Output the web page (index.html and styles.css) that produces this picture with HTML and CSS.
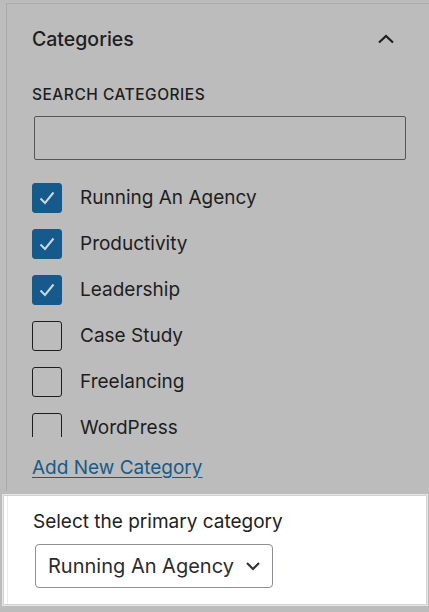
FILE: index.html
```html
<!DOCTYPE html>
<html lang="en">
<head>
<meta charset="utf-8">
<title>Categories</title>
<link rel="stylesheet" href="styles.css">
</head>
<body>
<div class="panel">
  <div class="panel-header">
    <h2 class="panel-title">Categories</h2>
    <svg class="chevron-up" width="18" height="10" viewBox="0 0 18 10" aria-hidden="true">
      <path d="M2 8.5 L9 2 L16 8.5" fill="none" stroke="#1e1e1e" stroke-width="2.2"/>
    </svg>
  </div>
  <label class="search-label" for="cat-search">SEARCH CATEGORIES</label>
  <input class="search-input" id="cat-search" type="text">
  <ul class="cat-list">
    <li class="cat-row"><span class="box checked"><svg width="30" height="30" viewBox="0 0 30 30"><path d="M8.5 15.5 L13 20 L21.5 9.5" fill="none" stroke="#c9d7e3" stroke-width="2"/></svg></span><span class="cat-name">Running An Agency</span></li>
    <li class="cat-row"><span class="box checked"><svg width="30" height="30" viewBox="0 0 30 30"><path d="M8.5 15.5 L13 20 L21.5 9.5" fill="none" stroke="#c9d7e3" stroke-width="2"/></svg></span><span class="cat-name">Productivity</span></li>
    <li class="cat-row"><span class="box checked"><svg width="30" height="30" viewBox="0 0 30 30"><path d="M8.5 15.5 L13 20 L21.5 9.5" fill="none" stroke="#c9d7e3" stroke-width="2"/></svg></span><span class="cat-name">Leadership</span></li>
    <li class="cat-row"><span class="box"></span><span class="cat-name">Case Study</span></li>
    <li class="cat-row"><span class="box"></span><span class="cat-name">Freelancing</span></li>
    <li class="cat-row"><span class="box"></span><span class="cat-name">WordPress</span></li>
  </ul>
  <a class="add-link" href="#">Add New Category</a>
</div>
<div class="primary-box">
  <div class="primary-inner">
    <div class="primary-label">Select the primary category</div>
    <div class="select">
      <span class="select-value">Running An Agency</span>
      <svg class="chevron-down" width="16" height="10" viewBox="0 0 16 10" aria-hidden="true">
        <path d="M2 2 L8 8 L14 2" fill="none" stroke="#333" stroke-width="2.2"/>
      </svg>
    </div>
  </div>
</div>
<div class="bottom-strip"></div>
</body>
</html>
```

FILE: styles.css
```css
* { box-sizing: border-box; }
html, body {
  margin: 0;
  padding: 0;
  background: #bcbcbc;
  height: 612px;
  overflow: hidden;
}
body {
  font-family: Inter, "Liberation Sans", sans-serif;
  color: #1e1e1e;
}
.panel {
  margin: 3px 0 0 6px;
  border-top: 1px solid #a9a9a9;
  border-left: 1px solid #a9a9a9;
  padding: 0 33px 0 25px;
  height: 488px;
}
.panel-header {
  display: flex;
  align-items: center;
  justify-content: space-between;
  padding-top: 23px;
  height: 47px;
}
.panel-title {
  margin: 0;
  font-size: 19.5px;
  font-weight: 500;
  line-height: 24px;
}
.chevron-up { margin-right: 1px; }
.search-label {
  display: block;
  margin-top: 34px;
  font-size: 15.5px;
  font-weight: 500;
  line-height: 20px;
  letter-spacing: 0.5px;
}
.search-input {
  display: block;
  margin: 11px 0 0 2px;
  width: 372px;
  height: 44px;
  border: 1px solid #555;
  border-radius: 2px;
  background: transparent;
}
.cat-list {
  list-style: none;
  margin: 23px 0 0;
  padding: 0;
  height: 254px;
  overflow: hidden;
  display: flex;
  flex-direction: column;
  gap: 16px;
}
.cat-row {
  display: flex;
  align-items: center;
  gap: 18px;
  flex: none;
  height: 30px;
}
.box {
  flex: none;
  width: 30px;
  height: 30px;
  border: 1px solid #1e1e1e;
  border-radius: 3px;
  display: flex;
}
.box.checked {
  background: #165a8b;
  border-color: #165a8b;
}
.box svg { margin: -1px; }
.cat-name {
  font-size: 19px;
  line-height: 20px;
}
.add-link {
  display: inline-block;
  margin-top: 19px;
  font-size: 19px;
  line-height: 24px;
  color: #1a5a86;
  text-decoration: underline;
  text-underline-offset: 3px;
}
.primary-box {
  margin: 4px 2px 0 3px;
  height: 110px;
  background: #fff;
  border: 1px solid #d2d2d2;
  box-shadow: 0 0 0 1px #e6e6e6;
}
.primary-inner {
  height: 100%;
  margin-left: 3px;
  border-left: 1px solid #ececec;
  padding: 14px 0 0 25px;
}
.primary-label {
  font-size: 19px;
  line-height: 24px;
  color: #222;
}
.select {
  margin: 10px 0 0 2px;
  width: 238px;
  height: 44px;
  border: 1px solid #8c8f94;
  border-radius: 4px;
  display: flex;
  align-items: center;
  justify-content: space-between;
  padding: 0 11px 0 12px;
}
.select-value {
  font-size: 20px;
  color: #2c2c2c;
}
.bottom-strip {
  height: 10px;
}
```
